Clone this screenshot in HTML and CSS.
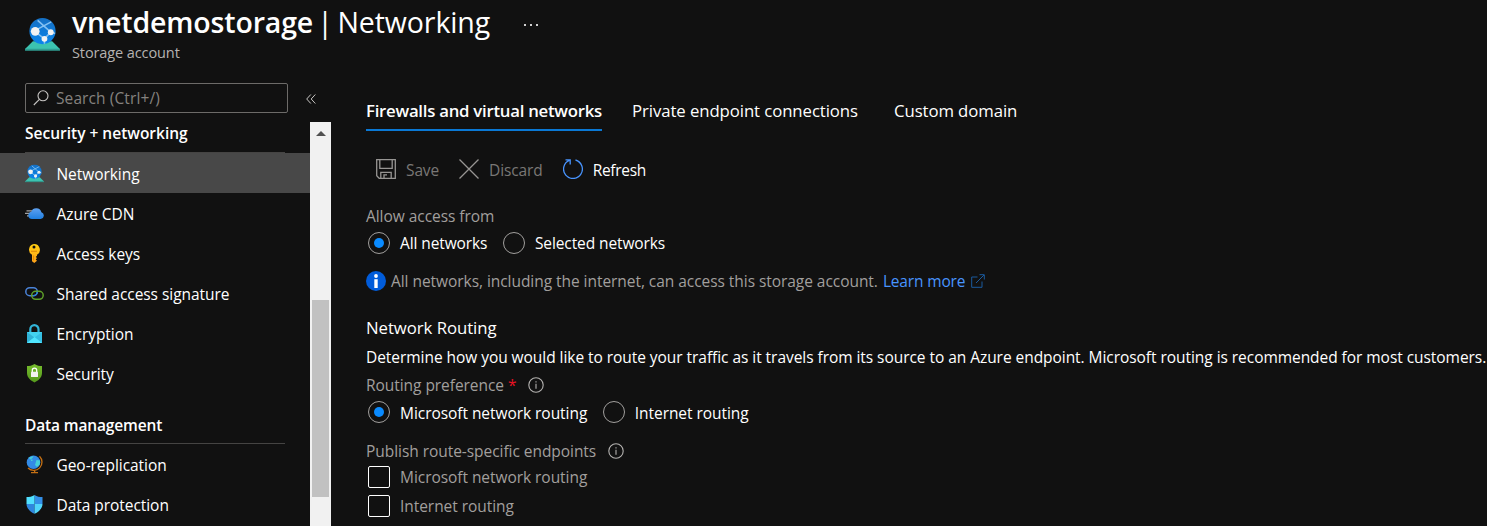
FILE: index.html
```html
<!DOCTYPE html>
<html lang="en">
<head>
<meta charset="utf-8">
<title>vnetdemostorage | Networking</title>
<link rel="stylesheet" href="styles.css">
</head>
<body>
<svg class="defs" width="0" height="0" aria-hidden="true">
  <defs>
    <linearGradient id="gGlobe" x1="0" y1="0" x2="0" y2="1"><stop offset="0" stop-color="#1570c4"/><stop offset="1" stop-color="#0a84ea"/></linearGradient>
    <linearGradient id="gCloud" x1="0" y1="0" x2="0" y2="1"><stop offset="0" stop-color="#5ea0ef"/><stop offset="1" stop-color="#1f7fe0"/></linearGradient>
    <linearGradient id="gKey" x1="0" y1="0" x2="0" y2="1"><stop offset="0" stop-color="#ffcf12"/><stop offset="1" stop-color="#fea11b"/></linearGradient>
    <linearGradient id="gShield" x1="0" y1="0" x2="0" y2="1"><stop offset="0" stop-color="#76bc2d"/><stop offset="1" stop-color="#559a1c"/></linearGradient>
    <symbol id="network" viewBox="0 0 36 34">
      <path d="M8 24h20L36 32H0z" fill="#3cc3b0"/><path d="M0 31.800h36v1.900H0z" fill="#2f9e92"/>
      <circle cx="18" cy="13.500" r="13.500" fill="url(#gGlobe)"/>
      <path d="M11 12.500 27 4M13 2.500 26.500 14.500M11 14.500 20 21.500M26.500 14.500l4.500 1.500M20 21.500l6.500-7M20 22v4.500" stroke="#83c1f3" stroke-width="1.600" fill="none"/>
      <circle cx="10.500" cy="13.700" r="4.500" fill="#f2f2f2"/><circle cx="26.500" cy="14.700" r="3" fill="#f2f2f2"/><circle cx="20" cy="21.500" r="3" fill="#f2f2f2"/>
    </symbol>
  </defs>
</svg>

<header class="header">
  <svg class="header-icon" viewBox="0 0 36 34"><use href="#network"/></svg>
  <div class="header-text">
    <h1 class="title"><span class="name">vnetdemostorage</span><span class="page">| Networking</span></h1>
    <p class="subtitle"><span>Storage account</span></p>
  </div>
  <div class="more"><i></i><i></i><i></i></div>
</header>

<div class="layout">
  <aside class="sidebar">
    <div class="search-row">
      <div class="search">
        <svg class="search-icon" viewBox="0 0 16 16"><circle cx="10" cy="5.800" r="5"/><path d="M6.400 9.400.8 15"/></svg>
        <span>Search (Ctrl+/)</span>
      </div>
      <svg class="collapse" viewBox="0 0 10 10"><path d="M4.800.5.700 5l4.100 4.500M9.300.5 5.200 5l4.100 4.500"/></svg>
    </div>
    <div class="menu-area">
      <nav class="menu">
        <h2 class="group"><span>Security + networking</span></h2>
        <a class="item active"><svg class="icon" viewBox="0 0 36 34"><use href="#network"/></svg><span>Networking</span></a>
        <a class="item"><svg class="icon" viewBox="0 0 19 19"><path d="M1.500 6.200H7v1.300H1.500zM0 8.700h6V10H0zM2 11.200h5v1.300H2z" fill="#a3a3a3"/><path d="M7 15a3.700 3.700 0 0 1-.8-7.300A5.400 5.400 0 0 1 16.400 8.200 3.500 3.500 0 0 1 15.700 15z" fill="url(#gCloud)"/></svg><span>Azure CDN</span></a>
        <a class="item"><svg class="icon" viewBox="0 0 19 19"><path d="M9 0a5.800 5.800 0 0 1 3 10.800v1l-1.300 1.100 1.300 1.200-1.300 1.300 1.300 1.300L9.300 19 7 17.200v-6.400A5.800 5.800 0 0 1 9 0z" fill="url(#gKey)"/><circle cx="9" cy="2.900" r="1.500" fill="#111"/><path d="M6 6.800h6v1H6zM8.200 11.500h.9v5h-.9z" fill="#d98208"/></svg><span>Access keys</span></a>
        <a class="item"><svg class="icon" viewBox="0 0 19 19" fill="none" stroke-width="1.500"><rect x=".8" y="3.700" width="11.500" height="8" rx="4" stroke="#4a83d8"/><rect x="6.700" y="7.300" width="11.500" height="8" rx="4" stroke="#5fa02a"/><path d="M8.300 11.700a4 4 0 0 0 4-4" stroke="#2a86d8"/></svg><span>Shared access signature</span></a>
        <a class="item"><svg class="icon" viewBox="0 0 19 19"><path d="M5.300 9V5.300a4.100 4.100 0 0 1 8.200 0V9" fill="none" stroke="#32b4d8" stroke-width="2.200"/><path d="M2 8h15v11H2z" fill="#43d3f0"/><path d="m2 8 7.500 5.500L2 19z" fill="#30b2d6"/><path d="m17 8-7.500 5.500L17 19z" fill="#35bfe4"/><path d="m2 19 7.500-6 7.500 6z" fill="#50e6ff"/></svg><span>Encryption</span></a>
        <a class="item"><svg class="icon" viewBox="0 0 19 19"><path d="M9.500 0C12 1.700 14.500 2 17 2.100V9c0 5-4.500 8-7.500 9.500C6.500 17 2 14 2 9V2.100C4.500 2 7 1.700 9.500 0z" fill="url(#gShield)"/><path d="M7.300 8.500V6.300a2.200 2.200 0 0 1 4.400 0v2.200" fill="none" stroke="#fff" stroke-width="1.300"/><rect x="6" y="7.700" width="7" height="5.300" rx=".5" fill="#f2f2f2"/></svg><span>Security</span></a>
        <h2 class="group second"><span>Data management</span></h2>
        <a class="item"><svg class="icon" viewBox="0 0 19 19"><path d="M14.500 1.200A8 8 0 0 1 3 13" fill="none" stroke="#c46f14" stroke-width="1.300"/><path d="M9 15h1.300v2H13v1.300H6V17h3z" fill="#c46f14"/><circle cx="8.500" cy="7.300" r="6.800" fill="#338be5"/><path d="M3.500 2.800 8.500.9 7.500 3 5.500 4.500zM11.500 5l3.500.500-.2 4-2.800 2.500-2-2zM6 4.500h1.500V6H6z" fill="#45cfd6"/></svg><span>Geo-replication</span></a>
        <a class="item"><svg class="icon" viewBox="0 0 19 19"><path d="M9.500 0C12 1.700 14.700 2 17.500 2.100V9H9.500z" fill="#338fe8"/><path d="M9.500 0C7 1.700 4.300 2 1.500 2.100V9h8z" fill="#50e0ff"/><path d="M1.500 9c0 5 5 8.500 8 9.800V9z" fill="#2f86de"/><path d="M17.500 9c0 5-5 8.500-8 9.800V9z" fill="#50d5fb"/></svg><span>Data protection</span></a>
      </nav>
      <div class="scrollbar"><b class="arrow"></b><b class="thumb"></b></div>
    </div>
  </aside>

  <main class="main">
    <div class="tabs">
      <a class="tab selected"><span>Firewalls and virtual networks</span></a>
      <a class="tab private"><span>Private endpoint connections</span></a>
      <a class="tab"><span>Custom domain</span></a>
    </div>
    <div class="toolbar">
      <div class="tool save"><svg viewBox="0 0 20 20"><path d="M.7.700h18.600v18.600H3.200L.7 16.800zM3.800.7v8.600h12.400V.7M4.800 19.300v-6h10.400v6M8 19.300v-3.500h3"/></svg><span>Save</span></div>
      <div class="tool discard"><svg viewBox="0 0 20 20"><path d="m.5.500 19 19M19.500.5l-19 19"/></svg><span>Discard</span></div>
      <div class="tool refresh"><svg viewBox="0 0 20 20"><path d="M12.500 1A9.400 9.400 0 1 1 6.300 1.400M2.500.9h4.700v4.600"/></svg><span>Refresh</span></div>
    </div>
    <div class="label access"><span>Allow access from</span></div>
    <div class="radios">
      <i class="radio on"></i><span>All networks</span>
      <i class="radio next"></i><span>Selected networks</span>
    </div>
    <div class="info">
      <svg class="info-icon" viewBox="0 0 20 20"><circle cx="10" cy="10" r="10" fill="#015cda"/><circle cx="10" cy="5" r="1.900" fill="#fff"/><path d="M8.300 8.200h3.400V17H8.300z" fill="#fff"/></svg>
      <span class="msg">All networks, including the internet, can access this storage account.</span>
      <a class="link"><span>Learn more</span></a>
      <svg class="external" viewBox="0 0 14 14"><path d="M6.500 3H.7v10.300H11V7.500M5 9l8-8M8.500.7h4.800v4.800"/></svg>
    </div>
    <h3 class="section"><span>Network Routing</span></h3>
    <p class="desc"><span>Determine how you would like to route your traffic as it travels from its source to an Azure endpoint. Microsoft routing is recommended for most customers.</span></p>
    <div class="label pref"><span>Routing preference</span><em>*</em><svg class="hint" viewBox="0 0 16 16"><circle cx="8" cy="8" r="7.200"/><path d="M8 6.800v5M8 4.200v1.300"/></svg></div>
    <div class="radios routing">
      <i class="radio on"></i><span>Microsoft network routing</span>
      <i class="radio next"></i><span>Internet routing</span>
    </div>
    <div class="label publish"><span>Publish route-specific endpoints</span><svg class="hint" viewBox="0 0 16 16"><circle cx="8" cy="8" r="7.200"/><path d="M8 6.800v5M8 4.200v1.300"/></svg></div>
    <div class="check"><i class="box"></i><span>Microsoft network routing</span></div>
    <div class="check"><i class="box"></i><span>Internet routing</span></div>
  </main>
</div>
</body>
</html>
```
FILE: styles.css
```css
* { box-sizing: border-box; }

body {
  margin: 0;
  height: 526px;
  overflow: hidden;
  background: #111;
  color: #fff;
  font: 15.5px/22px "Open Sans", "Noto Sans", sans-serif;
  letter-spacing: -0.05px;
  white-space: nowrap;
}

h1, h2, h3, p { margin: 0; font-weight: 400; }
i, em { font-style: normal; }
svg { display: block; flex: none; }
.defs { position: absolute; }

.header { display: flex; height: 83px; padding-left: 25px; }
.header-icon { width: 35px; height: 33px; margin-top: 18px; }
.header-text { margin-left: 12px; width: 450px; }
.title { display: flex; gap: 4px; height: 42px; padding-top: 2px; font-size: 28.500px; line-height: 40px; letter-spacing: -0.1px; }
.name { font-weight: 600; letter-spacing: -0.15px; }
.page { word-spacing: -2.5px; }
.subtitle { color: #b5b3b1; font-size: 14.500px; line-height: 22px; }
.subtitle span { letter-spacing: -0.1px; }
.more { display: flex; gap: 4px; padding-top: 24px; margin-left: 2px; }
.more i { width: 2px; height: 2px; background: #d0d0d0; }

.layout { display: flex; height: 443px; }
.sidebar { display: flex; flex-direction: column; width: 331px; flex: none; }
.search-row { display: flex; align-items: center; height: 30px; margin-bottom: 9px; padding-left: 25px; gap: 18px; }
.search { display: flex; align-items: center; gap: 7px; width: 263px; height: 30px; padding-left: 7px; border: 1px solid #6d6b69; border-radius: 2px; color: #85827f; letter-spacing: 0.1px; }
.search-icon { width: 16px; height: 16px; fill: none; stroke: #c8c6c4; stroke-width: 1.100; }
.collapse { width: 10px; height: 10px; margin-top: 2px; fill: none; stroke: #c8c6c4; stroke-width: 1; }

.menu-area { display: flex; flex: 1; min-height: 0; }
.menu { width: 310px; overflow: hidden; }
.group { height: 31px; margin: 0 25px; border-bottom: 1px solid #454443; font-size: 15.500px; font-weight: 600; letter-spacing: 0; }
.second { height: 51px; padding-top: 21px; letter-spacing: -0.14px; }
.item { display: flex; align-items: center; gap: 12.500px; height: 40px; padding: 2px 0 0 25px; }
.item .icon { width: 19px; height: 19px; margin-top: -1px; }
.active { background: #484848; }
.scrollbar { display: flex; flex-direction: column; align-items: center; width: 21px; background: #f1f1f1; }
.arrow { width: 0; height: 0; margin-top: 9px; border: 5px solid transparent; border-top: 0; border-bottom-color: #505050; }
.thumb { width: 17px; height: 197px; margin-top: 164px; background: #c1c1c1; }

.main { flex: 1; padding-left: 35px; }
.tabs { display: flex; gap: 30px; height: 48px; padding-top: 16px; font-size: 16.750px; letter-spacing: -0.08px; }
.tab { height: 32px; line-height: 23px; }
.private { width: 232px; }
.selected { border-bottom: 2px solid #0a78d4; font-weight: 600; letter-spacing: -0.25px; }
.toolbar { display: flex; height: 74px; padding: 28px 0 0 10px; color: #797775; letter-spacing: -0.12px; }
.tool { display: flex; align-items: center; gap: 10px; height: 22px; }
.tool svg { width: 20px; height: 20px; margin-top: -2px; fill: none; stroke: #979593; stroke-width: 1.300; }
.discard { margin-left: 20px; }
.refresh { margin-left: 20px; color: #fff; letter-spacing: -0.3px; }
.refresh svg { stroke: #4894fe; }
.label { display: flex; align-items: center; height: 22px; color: #a19f9d; }
.radios { display: flex; align-items: center; height: 32px; padding-left: 2px; letter-spacing: -0.1px; }
.radio { display: grid; place-items: center; width: 22px; height: 22px; margin-right: 10px; border: 1px solid #a19f9d; border-radius: 50%; }
.on::before { content: ""; width: 10px; height: 10px; border-radius: 50%; background: #0a8bff; }
.next { margin-left: 15.500px; }
.info { display: flex; align-items: center; height: 22px; margin-top: 11px; color: #a19f9d; }
.info-icon { width: 20px; height: 20px; margin-right: 5px; }
.link { margin-left: 5px; color: #4894fe; letter-spacing: -0.15px; }
.external { width: 14px; height: 14px; margin-left: 6px; fill: none; stroke: #1b5a9e; stroke-width: 1; }
.section { height: 24px; margin-top: 24px; font-size: 16.750px; line-height: 24px; }
.desc { height: 22px; margin-top: 6px; }
.pref { margin-top: 6px; }
.pref em { margin-left: 4px; color: #e81123; }
.hint { width: 16px; height: 16px; margin-left: 11.500px; fill: none; stroke: #b5b3b1; stroke-width: 1.100; }
.routing { letter-spacing: -0.05px; }
.routing span { padding-top: 2px; }
.publish { margin-top: 12px; }
.check { display: flex; align-items: center; gap: 10px; height: 29px; padding-left: 2px; color: #a19f9d; }
.box { width: 22px; height: 22px; border: 1px solid #fff; border-radius: 2px; }
```
